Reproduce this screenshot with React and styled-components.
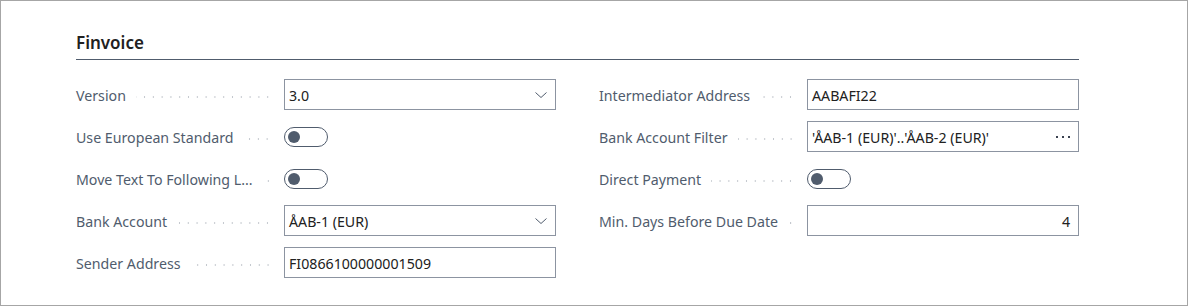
import React from "react";
import styled, { createGlobalStyle } from "styled-components";

const Global = createGlobalStyle`
  html, body { margin: 0; padding: 0; background: #fff; }
  body { font-family: "Segoe UI", "Noto Sans", "Open Sans", sans-serif; }
`;

const Frame = styled.div`
  box-sizing: border-box;
  width: 1188px;
  height: 306px;
  border: 1px solid #a6a6a6;
  padding: 0 0 0 75px;
`;

const Section = styled.section`
  width: 1003px;
`;

const Title = styled.h2`
  margin: 0;
  padding: 31px 0 5px;
  font-size: 17px;
  font-weight: 600;
  line-height: 22px;
  color: #212121;
  border-bottom: 1px solid #505c6d;
`;

const Columns = styled.div`
  display: grid;
  grid-template-columns: 480px 480px;
  column-gap: 43px;
  padding-top: 19px;
  align-items: start;
`;

const Column = styled.div`
  display: flex;
  flex-direction: column;
  gap: 11px;
`;

const Row = styled.div`
  display: flex;
  align-items: center;
  height: 31px;
`;

const LabelCell = styled.div`
  width: 208px;
  flex: none;
  display: flex;
  align-items: center;
  padding: 1px 12px 0 0;
  box-sizing: border-box;
  font-size: 14.2px;
  color: #505c6d;
  white-space: nowrap;
`;

const Leader = styled.span`
  flex: 1;
  height: 4px;
  margin: 4px 0 0 10px;
  min-width: 4px;
  background-image: radial-gradient(circle, #c4c8ce 0.9px, transparent 1.1px);
  background-size: 8.8px 4px;
  background-position: right center;
  background-repeat: repeat-x;
`;

const Box = styled.div`
  width: 272px;
  height: 31px;
  box-sizing: border-box;
  border: 1px solid #8c94a1;
  display: flex;
  align-items: center;
  padding: 1px 8px 0 4px;
  font-size: 14.2px;
  color: #212121;
  justify-content: ${(p) => (p.$right ? "flex-end" : "space-between")};
`;

const Toggle = styled.div`
  width: 44px;
  height: 20px;
  box-sizing: border-box;
  border: 1px solid #505c6d;
  border-radius: 10px;
  display: flex;
  align-items: center;
  padding-left: 3px;
  &::before {
    content: "";
    width: 12px;
    height: 12px;
    border-radius: 50%;
    background: #505c6d;
  }
`;

const Chevron = () => (
  <svg width="12" height="8" viewBox="0 0 12 8">
    <path d="M0.5 1.5 L6 6.5 L11.5 1.5" fill="none" stroke="#505c6d" strokeWidth="1" />
  </svg>
);

const Dots = () => (
  <svg width="14" height="4" viewBox="0 0 14 4">
    <rect x="0" y="1" width="2" height="2" fill="#3a4250" />
    <rect x="6" y="1" width="2" height="2" fill="#3a4250" />
    <rect x="12" y="1" width="2" height="2" fill="#3a4250" />
  </svg>
);

function Field({ label, children }) {
  return (
    <Row>
      <LabelCell>
        {label}
        <Leader />
      </LabelCell>
      {children}
    </Row>
  );
}

export default function App() {
  return (
    <Frame>
      <Global />
      <Section>
        <Title>Finvoice</Title>
        <Columns>
          <Column>
            <Field label="Version">
              <Box>
                3.0
                <Chevron />
              </Box>
            </Field>
            <Field label="Use European Standard">
              <Toggle />
            </Field>
            <Field label="Move Text To Following L...">
              <Toggle />
            </Field>
            <Field label="Bank Account">
              <Box>
                ÅAB-1 (EUR)
                <Chevron />
              </Box>
            </Field>
            <Field label="Sender Address">
              <Box>FI0866100000001509</Box>
            </Field>
          </Column>
          <Column>
            <Field label="Intermediator Address">
              <Box>AABAFI22</Box>
            </Field>
            <Field label="Bank Account Filter">
              <Box>
                'ÅAB-1 (EUR)'..'ÅAB-2 (EUR)'
                <Dots />
              </Box>
            </Field>
            <Field label="Direct Payment">
              <Toggle />
            </Field>
            <Field label="Min. Days Before Due Date">
              <Box $right>4</Box>
            </Field>
          </Column>
        </Columns>
      </Section>
    </Frame>
  );
}
